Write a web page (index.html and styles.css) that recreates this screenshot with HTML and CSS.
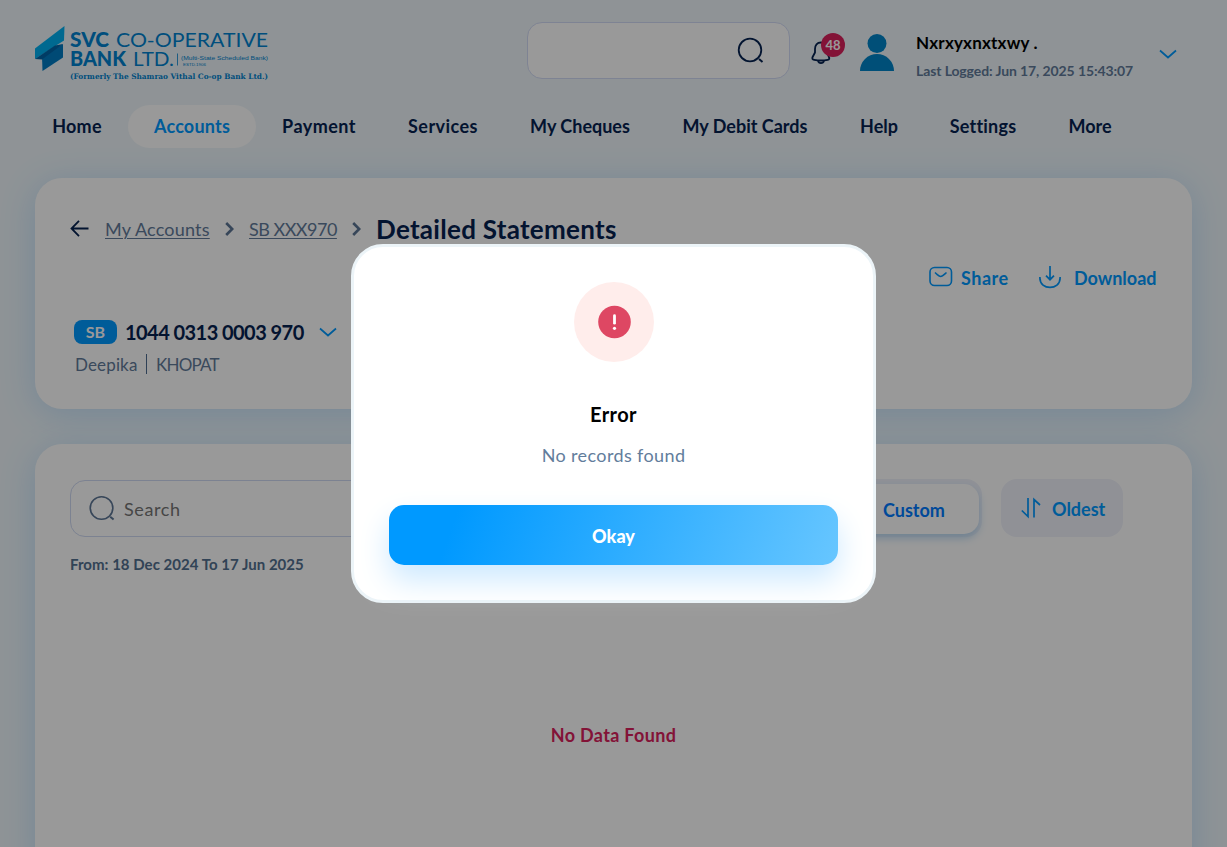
FILE: index.html
```html
<!DOCTYPE html>
<html lang="en">
<head>
<meta charset="utf-8">
<title>Detailed Statements</title>
<link rel="stylesheet" href="styles.css">
</head>
<body>
<div class="page">
  <header class="header">
    <svg class="logo" width="236" height="58" viewBox="0 0 236 58">
      <path d="M7 31.500 28 19V32.500L7.500 46Z" fill="#007cc4"/>
      <path d="M0 23.500 29.500 1 29 15.500 0 34Z" fill="#00b0f0"/>
      <path d="M0 34 20 20.500 28 19 7 34.500Z" fill="#0065a8"/>
      <g fill="#0083d0" font-family="Lato, sans-serif" font-weight="400">
        <text x="35" y="21.500" font-size="20" font-weight="900" textLength="39" lengthAdjust="spacingAndGlyphs">SVC</text>
        <text x="81" y="21.500" font-size="20" textLength="152" lengthAdjust="spacingAndGlyphs">CO-OPERATIVE</text>
        <text x="35" y="41" font-size="20" font-weight="900" textLength="56" lengthAdjust="spacingAndGlyphs">BANK</text>
        <text x="98" y="41" font-size="20" textLength="41" lengthAdjust="spacingAndGlyphs">LTD.</text>
        <path d="M142.500 28.500V40.500" stroke="#0083d0" stroke-width=".8"/>
        <text x="146" y="34.500" font-family="Liberation Sans, sans-serif" font-size="6" textLength="87" lengthAdjust="spacingAndGlyphs">(Multi-State Scheduled Bank)</text>
        <text x="148" y="41" font-family="Liberation Sans, sans-serif" font-size="4" textLength="23" lengthAdjust="spacingAndGlyphs">ESTD.1906</text>
        <text x="35" y="54" font-family="DejaVu Serif, serif" font-size="7.500" font-weight="700" textLength="198" lengthAdjust="spacingAndGlyphs">(Formerly The Shamrao Vithal Co-op Bank Ltd.)</text>
      </g>
    </svg>
    <div class="top-search">
      <svg width="28" height="28" viewBox="0 0 28 28" fill="none" stroke="#062250" stroke-width="1.800"><circle cx="13" cy="13" r="11.300"/><path d="m22 22 3.500 3" stroke-width="2"/></svg>
    </div>
    <div class="bell">
      <svg width="22" height="26" viewBox="0 0 22 26" fill="none" stroke="#062250" stroke-width="1.800" stroke-linejoin="round"><path d="M10 2.500C6 2.500 4 5 4 9v3.500L1.600 17c-.8 1.700 0 2.600 1.600 2.900 4.500.8 9 .8 13.500 0 1.600-.3 2-1.500 1.200-2.900L16 12.500V9c0-4-2-6.500-6-6.500Z"/><path d="M7 20.500c.8 3.400 5.200 3.400 6 0"/></svg>
      <span class="badge">48</span>
    </div>
    <svg class="avatar" width="34" height="38" viewBox="0 0 34 38" fill="#0084c8"><circle cx="17" cy="9.500" r="9.500"/><path d="M0 37a17 17 0 0 1 34 0Z"/></svg>
    <div class="user">
      <div class="user-name">Nxrxyxnxtxwy .</div>
      <div class="user-log">Last Logged: Jun 17, 2025 15:43:07</div>
    </div>
    <svg class="user-chev" width="18" height="10" viewBox="0 0 18 10" fill="none" stroke="#09f" stroke-width="1.700"><path d="m1 1.500 8 7 8-7"/></svg>
  </header>
  <nav class="nav">
    <a class="w102 loose">Home</a><a class="w128 active loose">Accounts</a><a class="w126 looser">Payment</a><a class="w122 looser">Services</a><a class="w152">My Cheques</a><a class="w178">My Debit Cards</a><a class="w90">Help</a><a class="w118 loose">Settings</a><a class="w94">More</a>
  </nav>
  <main class="main">
    <section class="card account">
      <div class="crumbs">
        <svg class="back" width="19" height="17" viewBox="0 0 19 17" fill="none" stroke="#062250" stroke-width="1.800"><path d="M18.500 8.500H1.500M9 .8 1.500 8.500 9 16.200"/></svg>
        <a class="crumb c1">My Accounts</a>
        <svg class="sep s1" width="9" height="14" viewBox="0 0 9 14" fill="none" stroke="#5c7594" stroke-width="2.600"><path d="m1.200 1 6 6-6 6"/></svg>
        <a class="crumb c2">SB XXX970</a>
        <svg class="sep s2" width="9" height="14" viewBox="0 0 9 14" fill="none" stroke="#5c7594" stroke-width="2.600"><path d="m1.200 1 6 6-6 6"/></svg>
        <h1 class="title">Detailed Statements</h1>
      </div>
      <div class="actions">
        <svg class="share-icon" width="24" height="22" viewBox="0 0 24 22" fill="none" stroke="#09f" stroke-width="1.600"><rect x="1" y="1.500" width="21.500" height="18" rx="4.500"/><path d="M6 6.500c4 3.500 4 4 5.700 4s2-.5 5.800-4"/></svg>
        <span class="share">Share</span>
        <svg class="dl-icon" width="22" height="24" viewBox="0 0 22 24" fill="none" stroke="#09f" stroke-width="1.700"><path d="M.9 12v1c0 12.500 20.200 12.500 20.200 0v-1M11 1v13.500M7 10.700l4 4 4-4"/></svg>
        <span class="download">Download</span>
      </div>
      <div class="acct-row">
        <span class="tag">SB</span>
        <span class="acct-no">1044 0313 0003 970</span>
        <svg width="18" height="10" viewBox="0 0 18 10" fill="none" stroke="#09f" stroke-width="1.700"><path d="m1 1.500 8 7 8-7"/></svg>
      </div>
      <div class="owner"><span class="owner-name">Deepika</span><span class="branch">KHOPAT</span></div>
    </section>
    <section class="card records">
      <div class="filters">
        <div class="search">
          <svg width="27" height="27" viewBox="0 0 28 28" fill="none" stroke="#5c7594" stroke-width="1.700"><circle cx="13" cy="13.500" r="11.700"/><path d="m22 22.500 3.500 3" stroke-width="2"/></svg>
          <span>Search</span>
        </div>
        <div class="periods"><span class="custom">Custom</span></div>
        <div class="sort">
          <svg width="20" height="22" viewBox="0 0 20 22" fill="none" stroke="#09f" stroke-width="1.700"><path d="M.8 13.500 7 19.500V1M13 20.500V2.500l6 5.500"/></svg>
          <span>Oldest</span>
        </div>
      </div>
      <div class="range">From: 18 Dec 2024 To 17 Jun 2025</div>
      <div class="empty">No Data Found</div>
    </section>
  </main>
</div>
<div class="overlay">
  <div class="modal">
    <div class="alert"><svg width="34" height="34" viewBox="0 0 34 34"><circle cx="17.500" cy="17" r="16.300" fill="#de4763"/><path d="M17.500 10.700v7.500" stroke="#fff" stroke-width="2.800" stroke-linecap="round"/><circle cx="17.500" cy="23.300" r="1.600" fill="#fff"/></svg></div>
    <h2 class="modal-title">Error</h2>
    <p class="modal-text">No records found</p>
    <button class="okay">Okay</button>
  </div>
</div>
</body>
</html>
```

FILE: styles.css
```css
* { box-sizing: border-box; }
body { margin: 0; font-family: Lato, "Noto Sans", sans-serif; font-weight: 700; color: #062250; }
svg { display: block; flex: none; }
.page { width: 100%; height: 847px; overflow: hidden; background: #eef6fa; }
.header { display: flex; height: 105px; padding: 22px 50px 0 35px; white-space: nowrap; }
.logo { margin-top: 3px; }
.top-search { width: 263px; height: 57px; margin-left: 256px; padding: 14px 24px 0 0; border: 1px solid #d3dbf5; border-radius: 15px; background: #fff; display: flex; justify-content: flex-end; }
.bell { position: relative; width: 35px; margin: 18px 0 0 21px; }
.badge { position: absolute; left: 10px; top: -7px; width: 24px; height: 24px; border-radius: 50%; background: #da215d; color: #fff; font-size: 13px; line-height: 24px; text-align: center; }
.avatar { margin: 12px 0 0 14px; }
.user { width: 243px; margin: 10px 0 0 22px; }
.user-name { color: #000; font-size: 17px; line-height: 22px; letter-spacing: .2px; }
.user-log { color: #627a99; font-size: 14px; line-height: 20px; margin-top: 7px; letter-spacing: -.1px; }
.user-chev { margin-top: 27px; }
.nav { display: flex; height: 43px; margin-left: 26px; font-size: 18px; line-height: 42px; text-align: center; white-space: nowrap; }
.nav .active { background: #fff; border-radius: 22px; color: #09f; }
.loose { letter-spacing: .2px; }
.looser { letter-spacing: .45px; }
.w102 { width: 102px; } .w128 { width: 128px; } .w126 { width: 126px; } .w122 { width: 122px; }
.w152 { width: 152px; } .w178 { width: 178px; } .w90 { width: 90px; } .w118 { width: 118px; } .w94 { width: 96px; }
.main { display: flex; flex-direction: column; gap: 35px; padding: 30px 35px 0; }
.card { background: #fff; border-radius: 27px; box-shadow: 0 5px 35px #c1e0fa; white-space: nowrap; }
.account { height: 231px; padding: 32px 35px 0; }
.crumbs { display: flex; align-items: center; height: 38px; }
.back { margin-top: -2px; }
.crumb { font-size: 18px; font-weight: 400; color: #627a99; text-decoration: underline; text-underline-offset: 2px; text-decoration-thickness: 1px; }
.c1 { margin-left: 16px; width: 105px; letter-spacing: .2px; }
.c2 { width: 88px; margin-left: 15px; letter-spacing: -.5px; }
.s1 { margin-left: 15px; } .s2 { margin-left: 15px; }
.title { margin: 0 0 0 15px; font-size: 26px; letter-spacing: .28px; }
.actions { display: flex; justify-content: flex-end; align-items: center; height: 30px; margin-top: 15px; font-size: 18px; color: #09f; line-height: 30px; }
.share-icon { margin-top: -2px; }
.share { width: 48px; margin-left: 8px; letter-spacing: .5px; }
.dl-icon { margin: -2px 0 0 30px; }
.download { width: 83px; margin-left: 13px; }
.acct-row { display: flex; align-items: center; height: 26px; margin: 26px 0 0 4px; }
.tag { width: 43px; height: 24px; border-radius: 8px; background: #09f; color: #fff; font-size: 16px; line-height: 24px; text-align: center; }
.acct-no { width: 179px; margin: 0 15px 0 8px; font-size: 20px; line-height: 26px; letter-spacing: -.55px; }
.owner { display: flex; height: 20px; margin: 9px 0 0 5px; font-weight: 400; font-size: 17px; line-height: 21px; color: #627a99; }
.owner-name { width: 72px; border-right: 1px solid #4d6b8f; letter-spacing: .15px; }
.branch { margin-left: 9px; letter-spacing: -.8px; }
.records { height: 440px; padding: 35px 35px 0; }
.filters { display: flex; height: 58px; }
.search { display: flex; align-items: center; gap: 8px; width: 380px; height: 57px; margin-top: 1px; padding-left: 18px; border: 1px solid #cfd9f2; border-radius: 15px; font-size: 18px; font-weight: 400; color: #757575; letter-spacing: .6px; }
.periods { width: 382px; height: 58px; margin-left: 150px; padding: 5px 3px 3px; border-radius: 16px; background: #f0f2fb; }
.custom { display: block; width: 150px; height: 50px; margin-left: auto; padding-left: 54px; border-radius: 15px; background: #fff; box-shadow: 0 4px 8px #b9d9f3; color: #007bff; font-size: 18px; line-height: 52px; }
.sort { display: flex; width: 122px; height: 58px; margin-left: 19px; padding: 18px 0 0 20px; border-radius: 16px; background: #f0f2fb; color: #09f; font-size: 18px; line-height: 25px; gap: 11px; }
.range { margin-top: 16px; color: #53708f; font-size: 15px; line-height: 22px; letter-spacing: .03px; }
.empty { margin-top: 149px; color: #da215d; font-size: 18px; line-height: 22px; text-align: center; letter-spacing: .33px; }
.overlay { position: fixed; inset: 0; display: flex; align-items: center; justify-content: center; background: rgba(0,0,0,.4); }
.modal { width: 525px; height: 359px; padding: 35px; border: 3px solid #ecf4f8; border-radius: 32px; background: #fff; text-align: center; }
.alert { display: flex; align-items: center; justify-content: center; width: 80px; height: 80px; margin: 0 auto; border-radius: 50%; background: #ffedeb; }
.modal-title { margin: 39px 0 0; font-size: 20px; line-height: 26px; color: #000; letter-spacing: .4px; }
.modal-text { margin: 15px 0 0; font-size: 18px; line-height: 26px; font-weight: 400; color: #627d9c; letter-spacing: .38px; }
.okay { display: block; width: 100%; height: 60px; margin: 37px 0 0; padding: 2px 0 0; border: 0; border-radius: 15px; background: linear-gradient(110deg, #09f 15%, #67c6ff 100%); box-shadow: 0 15px 30px #cde9ff; color: #fff; font: 900 18px Lato, sans-serif; }
```
